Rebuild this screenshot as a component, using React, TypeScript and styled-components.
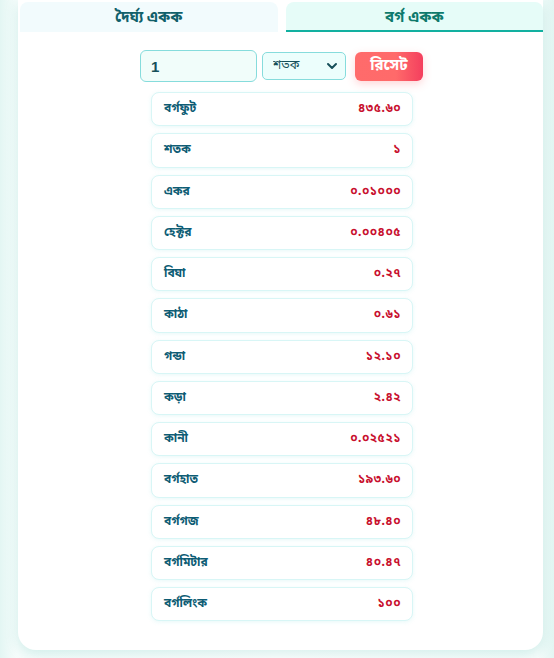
import React, { useState } from 'react';
import styled, { createGlobalStyle } from 'styled-components';
import { ChevronDown } from 'lucide-react';

const GlobalStyle = createGlobalStyle`
  html, body {
    margin: 0;
    padding: 0;
  }
  body {
    background: linear-gradient(90deg, #e3f6f3 0%, #f7fdfc 3%, #ffffff 50%, #f7fdfc 97%, #e3f6f3 100%);
    font-family: "Noto Sans Bengali", "Noto Sans", "DejaVu Sans", sans-serif;
    min-height: 658px;
    overflow: hidden;
  }
`;

type Unit = {
  name: string;
  value: string;
};

const units: Unit[] = [
  { name: 'বর্গফুট', value: '৪৩৫.৬০' },
  { name: 'শতক', value: '১' },
  { name: 'একর', value: '০.০১০০০' },
  { name: 'হেক্টর', value: '০.০০৪০৫' },
  { name: 'বিঘা', value: '০.২৭' },
  { name: 'কাঠা', value: '০.৬১' },
  { name: 'গন্ডা', value: '১২.১০' },
  { name: 'কড়া', value: '২.৪২' },
  { name: 'কানী', value: '০.০২৫২১' },
  { name: 'বর্গহাত', value: '১৯৩.৬০' },
  { name: 'বর্গগজ', value: '৪৮.৪০' },
  { name: 'বর্গমিটার', value: '৪০.৪৭' },
  { name: 'বর্গলিংক', value: '১০০' },
];

const App: React.FC = () => {
  const [tab, setTab] = useState<'length' | 'area'>('area');
  const [amount, setAmount] = useState<string>('1');
  const [unit, setUnit] = useState<string>('শতক');

  return (
    <>
      <GlobalStyle />
      <Card>
        <Tabs>
          <Tab $active={tab === 'length'} onClick={() => setTab('length')}>
            দৈর্ঘ্য একক
          </Tab>
          <Tab $active={tab === 'area'} onClick={() => setTab('area')}>
            বর্গ একক
          </Tab>
        </Tabs>

        <Controls>
          <AmountInput
            type="text"
            value={amount}
            onChange={(e) => setAmount(e.target.value)}
          />
          <SelectWrap>
            <UnitSelect value={unit} onChange={(e) => setUnit(e.target.value)}>
              {units.map((u) => (
                <option key={u.name} value={u.name}>
                  {u.name}
                </option>
              ))}
            </UnitSelect>
            <Chevron>
              <ChevronDown size={16} strokeWidth={3} />
            </Chevron>
          </SelectWrap>
          <ResetButton onClick={() => setAmount('1')}>রিসেট</ResetButton>
        </Controls>

        <ResultList>
          {units.map((u) => (
            <ResultRow key={u.name}>
              <UnitName>{u.name}</UnitName>
              <UnitValue>{u.value}</UnitValue>
            </ResultRow>
          ))}
        </ResultList>
      </Card>
    </>
  );
};

const Card = styled.div`
  width: 525px;
  margin-left: 18px;
  background: #ffffff;
  border-radius: 0 0 18px 18px;
  box-shadow: 0 4px 14px rgba(20, 160, 145, 0.18);
  padding: 2px 0 29px;
  box-sizing: border-box;
  display: flex;
  flex-direction: column;
`;

const Tabs = styled.div`
  display: flex;
  gap: 8px;
  padding: 0 0 0 2px;
`;

const Tab = styled.button<{ $active: boolean }>`
  flex: 1;
  height: 30px;
  border: none;
  border-radius: 8px 8px 0 0;
  background: ${(p) => (p.$active ? '#e6fcf8' : '#f2fbfd')};
  border-bottom: 2px solid ${(p) => (p.$active ? '#12b0a0' : 'transparent')};
  color: ${(p) => (p.$active ? '#0e7a6c' : '#11606a')};
  font-family: inherit;
  font-size: 15px;
  font-weight: 700;
  padding: 4px 0 0;
  cursor: pointer;
`;

const Controls = styled.div`
  display: flex;
  justify-content: center;
  align-items: center;
  gap: 5px;
  margin-top: 18px;
  padding-left: 2px;
`;

const AmountInput = styled.input`
  width: 117px;
  height: 32px;
  box-sizing: border-box;
  border: 1px solid #86dcdc;
  border-radius: 6px;
  background: #f1fdfa;
  padding: 0 10px;
  font-family: "Liberation Sans", Arial, sans-serif;
  font-size: 15px;
  font-weight: 700;
  color: #17505a;
  outline: none;
`;

const SelectWrap = styled.div`
  position: relative;
  width: 84px;
  height: 28px;
  margin-right: 4px;
`;

const UnitSelect = styled.select`
  appearance: none;
  width: 100%;
  height: 100%;
  box-sizing: border-box;
  border: 1px solid #86dcdc;
  border-radius: 5px;
  background: #ecfefc;
  padding: 0 0 0 10px;
  font-family: inherit;
  font-size: 12px;
  color: #17505a;
  outline: none;
`;

const Chevron = styled.span`
  position: absolute;
  right: 6px;
  top: 50%;
  transform: translateY(-50%);
  display: flex;
  color: #17505a;
  pointer-events: none;
`;

const ResetButton = styled.button`
  width: 68px;
  height: 29px;
  border: none;
  border-radius: 6px;
  background: linear-gradient(90deg, #ff6b6b 0%, #ff6a6a 60%, #f43f5e 100%);
  box-shadow: 0 3px 8px rgba(255, 90, 100, 0.25);
  color: #ffffff;
  font-family: inherit;
  font-size: 15px;
  font-weight: 700;
  padding: 0;
  cursor: pointer;
`;

const ResultList = styled.div`
  display: flex;
  flex-direction: column;
  align-items: center;
  gap: 7px;
  margin-top: 10px;
  padding-left: 3px;
`;

const ResultRow = styled.div`
  width: 262px;
  height: 34.25px;
  box-sizing: border-box;
  display: flex;
  justify-content: space-between;
  align-items: center;
  padding: 0 11px 0 12px;
  border: 1px solid #d8f6f6;
  border-radius: 8px;
  background: #ffffff;
  box-shadow: 0 1px 4px rgba(120, 220, 220, 0.18);
`;

const UnitName = styled.span`
  font-size: 12px;
  font-weight: 700;
  color: #0d5c74;
`;

const UnitValue = styled.span`
  font-size: 12px;
  font-weight: 700;
  color: #c8102e;
  letter-spacing: 0.5px;
`;

export default App;
